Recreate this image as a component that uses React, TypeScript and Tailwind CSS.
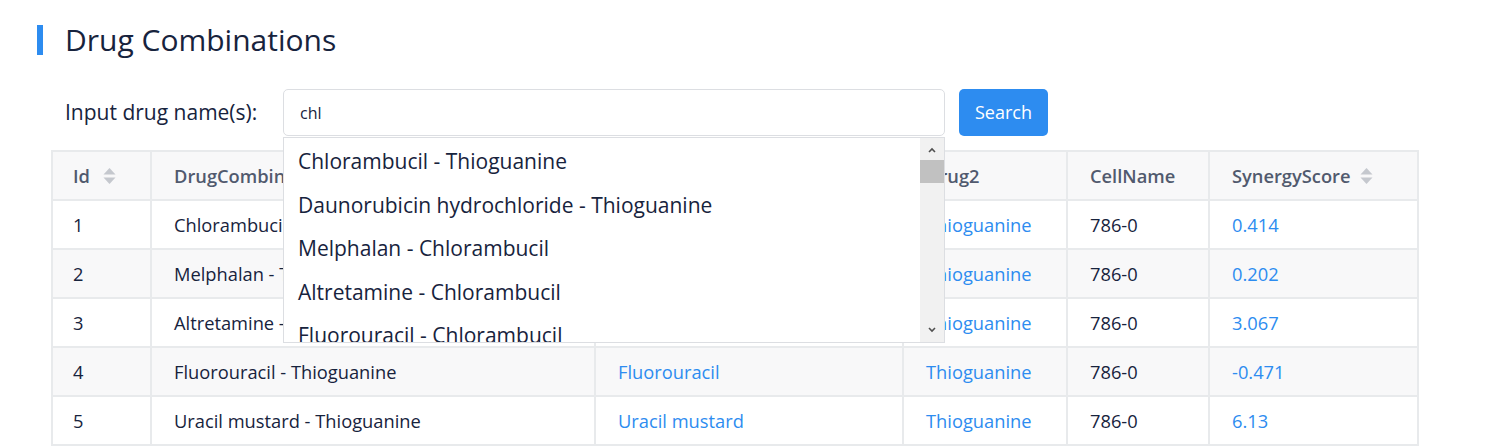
import React from 'react';

const ROWS = [
  { id: 1, combo: 'Chlorambucil - Thioguanine', d1: 'Chlorambucil', d2: 'Thioguanine', cell: '786-0', score: '0.414' },
  { id: 2, combo: 'Melphalan - Thioguanine', d1: 'Melphalan', d2: 'Thioguanine', cell: '786-0', score: '0.202' },
  { id: 3, combo: 'Altretamine - Thioguanine', d1: 'Altretamine', d2: 'Thioguanine', cell: '786-0', score: '3.067' },
  { id: 4, combo: 'Fluorouracil - Thioguanine', d1: 'Fluorouracil', d2: 'Thioguanine', cell: '786-0', score: '-0.471' },
  { id: 5, combo: 'Uracil mustard - Thioguanine', d1: 'Uracil mustard', d2: 'Thioguanine', cell: '786-0', score: '6.13' },
];

const SUGGESTIONS = [
  'Chlorambucil - Thioguanine',
  'Daunorubicin hydrochloride - Thioguanine',
  'Melphalan - Chlorambucil',
  'Altretamine - Chlorambucil',
  'Fluorouracil - Chlorambucil',
];

const SortIcon = ({ wide }: { wide?: boolean }) => (
  <svg width="13" height="18" viewBox="0 0 13 18" className={`inline-block -mt-1 ${wide ? 'ml-[13px]' : 'ml-[9px]'}`}>
    <path d="M6.5 1 L12.5 7.5 H0.5 Z" fill="#c5c8ce" />
    <path d="M6.5 17 L12.5 10.5 H0.5 Z" fill="#c5c8ce" />
  </svg>
);

const App = () => {
  return (
    <div className="w-[1491px] h-[447px] overflow-hidden bg-white" style={{ fontFamily: '"Open Sans", "Noto Sans", sans-serif' }}>
      {/* Title */}
      <div className="flex items-center pl-[37px] pt-[25px]">
        <div className="w-[6px] h-[30px] bg-[#2d8cf0]" />
        <h1 className="ml-[22px] text-[30px] leading-[30px] text-[#17233d] font-normal">Drug Combinations</h1>
      </div>

      {/* Search */}
      <div className="relative pl-[51px] mt-[34px]">
        <div className="flex items-center h-[47px]">
          <label className="w-[232px] pl-[14px] text-[21px] text-[#17233d]">Input drug name(s):</label>
          <div className="w-[662px] h-[47px] border border-[#dcdee2] rounded-[5px] flex items-center px-[16px] text-[16px] text-[#17233d]">
            chl
          </div>
          <button className="ml-[14px] w-[89px] h-[47px] rounded-[5px] bg-[#2d8cf0] text-white text-[18px]">Search</button>
        </div>

        {/* Autocomplete dropdown */}
        <div className="absolute left-[283px] top-[48px] w-[662px] h-[206px] bg-white border border-[#dcdee2] z-10 flex overflow-hidden">
          <ul className="flex-1 pl-[14px] pt-[6px]">
            {SUGGESTIONS.map((s) => (
              <li key={s} className="h-[43.5px] leading-[34px] text-[21px] text-[#17233d] whitespace-nowrap">{s}</li>
            ))}
          </ul>
          <div className="w-[24px] h-full bg-[#f1f1f1] flex flex-col items-center">
            <svg width="10" height="20" viewBox="0 0 10 20" className="mt-[2px]">
              <path d="M2 12 L5 9 L8 12" stroke="#505050" strokeWidth="1.6" fill="none" />
            </svg>
            <div className="w-[24px] h-[23px] bg-[#c1c1c1]" />
            <div className="flex-1" />
            <svg width="10" height="20" viewBox="0 0 10 20" className="mb-[2px]">
              <path d="M2 8 L5 11 L8 8" stroke="#505050" strokeWidth="1.6" fill="none" />
            </svg>
          </div>
        </div>

        {/* Table */}
        <table className="mt-[14px] w-[1366px] border-collapse border-2 border-[#e8eaec] table-fixed text-[18.3px]">
          <colgroup>
            <col className="w-[99px]" />
            <col className="w-[444px]" />
            <col className="w-[308px]" />
            <col className="w-[164px]" />
            <col className="w-[142px]" />
            <col className="w-[209px]" />
          </colgroup>
          <thead>
            <tr className="h-[49px] bg-[#f8f8f9] text-[#515a6e] text-left">
              <th className="border-2 border-[#e8eaec] pl-[20px] font-semibold">Id<SortIcon wide /></th>
              <th className="border-2 border-[#e8eaec] pl-[22px] font-semibold">DrugCombination</th>
              <th className="border-2 border-[#e8eaec] pl-[22px] font-semibold">Drug1</th>
              <th className="border-2 border-[#e8eaec] pl-[22px] font-semibold">Drug2</th>
              <th className="border-2 border-[#e8eaec] pl-[22px] font-semibold">CellName</th>
              <th className="border-2 border-[#e8eaec] pl-[22px] font-semibold">SynergyScore<SortIcon /></th>
            </tr>
          </thead>
          <tbody>
            {ROWS.map((r, i) => (
              <tr key={r.id} className={`h-[49px] ${i % 2 === 1 ? 'bg-[#f8f8f9]' : 'bg-white'}`}>
                <td className="border-2 border-[#e8eaec] pl-[20px] text-[#17233d]">{r.id}</td>
                <td className="border-2 border-[#e8eaec] pl-[22px] text-[#17233d]">{r.combo}</td>
                <td className="border-2 border-[#e8eaec] pl-[22px] text-[#2d8cf0]">{r.d1}</td>
                <td className="border-2 border-[#e8eaec] pl-[22px] text-[#2d8cf0]">{r.d2}</td>
                <td className="border-2 border-[#e8eaec] pl-[22px] text-[#17233d]">{r.cell}</td>
                <td className="border-2 border-[#e8eaec] pl-[22px] text-[#2d8cf0]">{r.score}</td>
              </tr>
            ))}
          </tbody>
        </table>
      </div>
    </div>
  );
};

export default App;
